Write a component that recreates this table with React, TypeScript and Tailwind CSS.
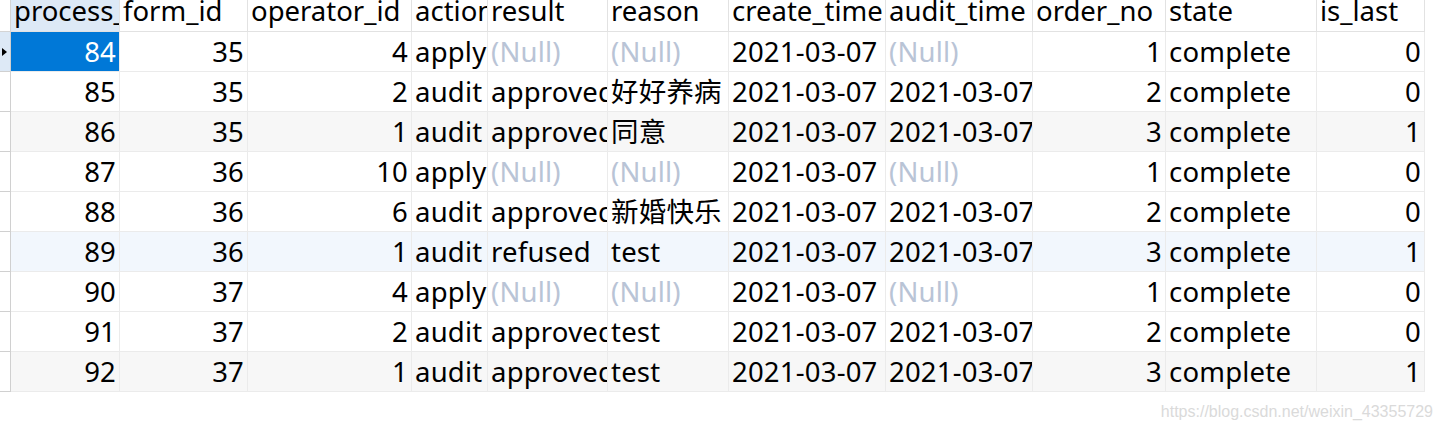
import React from 'react';

type Cell = string | null;

const columns = [
  { name: 'process_id', right: true },
  { name: 'form_id', right: true },
  { name: 'operator_id', right: true },
  { name: 'action', right: false },
  { name: 'result', right: false },
  { name: 'reason', right: false },
  { name: 'create_time', right: false },
  { name: 'audit_time', right: false },
  { name: 'order_no', right: true },
  { name: 'state', right: false },
  { name: 'is_last', right: true },
];

const d = '2021-03-07';

const rows: Cell[][] = [
  ['84', '35', '4', 'apply', null, null, d, null, '1', 'complete', '0'],
  ['85', '35', '2', 'audit', 'approved', '好好养病', d, d, '2', 'complete', '0'],
  ['86', '35', '1', 'audit', 'approved', '同意', d, d, '3', 'complete', '1'],
  ['87', '36', '10', 'apply', null, null, d, null, '1', 'complete', '0'],
  ['88', '36', '6', 'audit', 'approved', '新婚快乐', d, d, '2', 'complete', '0'],
  ['89', '36', '1', 'audit', 'refused', 'test', d, d, '3', 'complete', '1'],
  ['90', '37', '4', 'apply', null, null, d, null, '1', 'complete', '0'],
  ['91', '37', '2', 'audit', 'approved', 'test', d, d, '2', 'complete', '0'],
  ['92', '37', '1', 'audit', 'approved', 'test', d, d, '3', 'complete', '1'],
];

// row backgrounds as seen in the grid (every third row shaded, one hovered)
const rowBg = (i: number) => {
  if (i === 5) return 'bg-[#f2f7fd]';
  if (i === 2 || i === 8) return 'bg-[#f7f7f7]';
  return 'bg-white';
};

const App: React.FC = () => {
  return (
    <div className="w-[1442px] h-[428px] bg-white overflow-hidden font-['Noto_Sans','Noto_Sans_CJK_SC',sans-serif] text-[27.5px] text-black">
      <div className="grid grid-cols-[11px_109px_128px_164px_76px_120px_121px_157px_147px_133px_151px_108px] w-[1425px]">
        {/* Header */}
        <div className="h-[32px] border-r border-b border-[#d4d4d4] bg-white" />
        {columns.map((c, i) => (
          <div
            key={c.name}
            className={`h-[32px] border-r border-b border-[#e2e2e2] pl-[3px] leading-[22px] whitespace-nowrap overflow-hidden ${
              i === 0 ? 'bg-[#dde9f6]' : 'bg-white'
            }`}
          >
            {c.name}
          </div>
        ))}

        {/* Rows */}
        {rows.map((r, ri) => (
          <React.Fragment key={ri}>
            <div
              className={`h-[40px] border-r border-b border-[#d0d0d0] flex items-center ${
                ri === 0 ? 'bg-[#dde9f6]' : 'bg-white'
              }`}
            >
              {ri === 0 && (
                <div className="ml-[2px] w-0 h-0 border-y-[4px] border-y-transparent border-l-[5px] border-l-black" />
              )}
            </div>
            {r.map((v, ci) => {
              const selected = ri === 0 && ci === 0;
              const bg = selected ? 'bg-[#0078d7] text-white' : rowBg(ri);
              return (
                <div
                  key={ci}
                  className={`h-[40px] border-r border-b border-[#ebebeb] leading-[39px] whitespace-nowrap overflow-hidden tracking-[0.2px] ${bg} ${
                    columns[ci].right ? 'text-right pr-[3px]' : 'pl-[3px]'
                  }`}
                >
                  {v === null ? <span className="text-[#b9c4d6]">(Null)</span> : v}
                </div>
              );
            })}
          </React.Fragment>
        ))}
      </div>

      <div className="flex justify-end pr-[9px] pt-[8px]">
        <span className="font-['Liberation_Sans',sans-serif] text-[16px] text-[#dadada]">
          https://blog.csdn.net/weixin_43355729
        </span>
      </div>
    </div>
  );
};

export default App;
